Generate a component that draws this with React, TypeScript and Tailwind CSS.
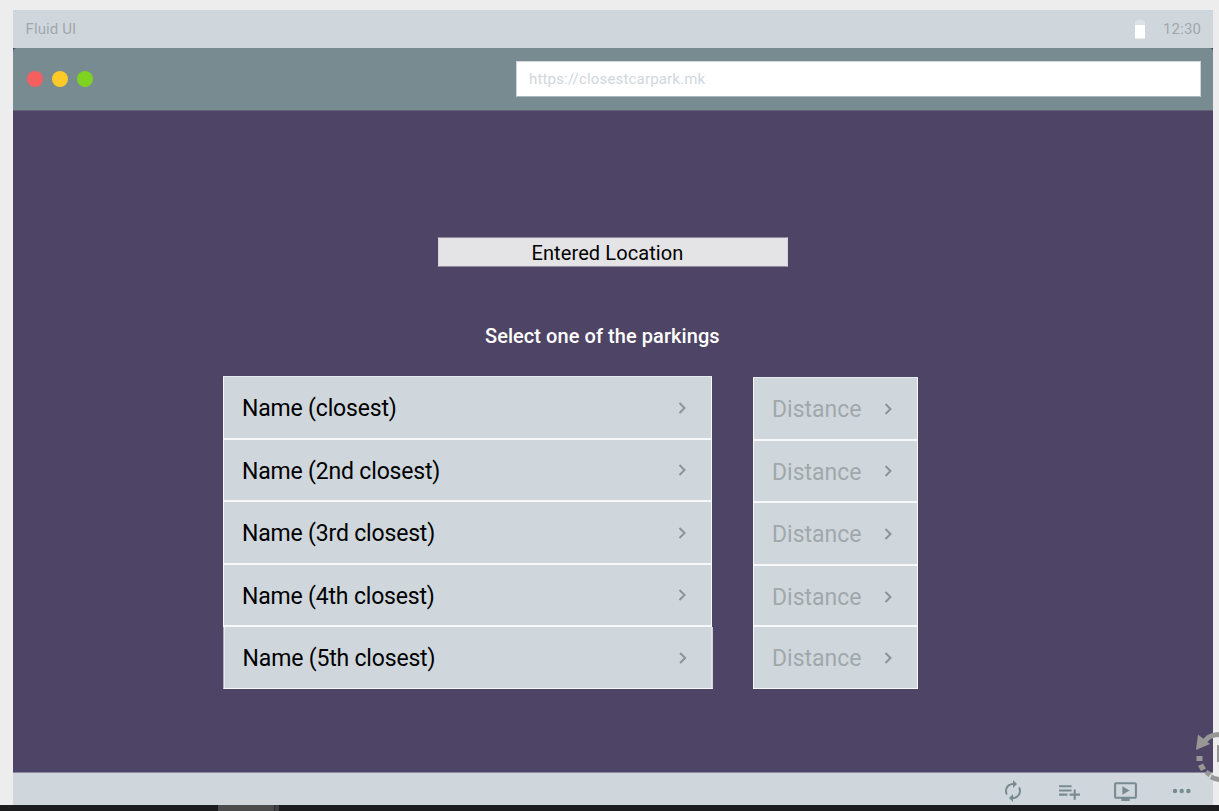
const names = [
  { label: "Name (closest)", box: "h-[63px] border-b-2" },
  { label: "Name (2nd closest)", box: "h-[62px] border-b-2" },
  { label: "Name (3rd closest)", box: "h-[63px] border-b-2" },
  { label: "Name (4th closest)", box: "h-[62px] border-b-2" },
  { label: "Name (5th closest)", box: "h-[62px] border-b translate-x-[0.6px]" },
];

const distances = [
  "h-[63px] border-b-2",
  "h-[62px] border-b-2",
  "h-[63px] border-b-2",
  "h-[61px] border-b-2 pt-[2px]",
  "h-[62px] border-b",
];

function Chevron() {
  return (
    <svg viewBox="0 0 10 14" className="h-[14px] w-[10px] shrink-0" fill="none" stroke="#8f9294" strokeWidth="2">
      <path d="M2.500 2l5 5-5 5" />
    </svg>
  );
}

function StatusBar() {
  return (
    <div className="flex h-[38px] items-center justify-between bg-[#cfd7dd] pr-[12px] pl-[12.5px] text-[15px] font-[450] tracking-[0.12px] text-[#a1a8ab]">
      <span>Fluid UI</span>
      <div className="flex items-center gap-[18px]">
        <svg viewBox="0 0 10 20" className="h-[20px] w-[10px]">
          <path d="M0 6V3.500Q0 1.500 2.500 1.500V0.500H7.500V1.500Q10 1.500 10 3.500V6Z" fill="#dde3e7" />
          <rect x="0" y="6" width="10" height="13.500" fill="#fff" />
        </svg>
        <span>12:30</span>
      </div>
    </div>
  );
}

function BrowserBar() {
  return (
    <div className="bg-[#4e4465]">
      <div className="flex h-[62px] items-center justify-between rounded-t-[4px] bg-[#788b90] pr-[12px] pl-[14px]">
        <div className="flex gap-[9px]">
          <span className="size-[16px] rounded-full bg-[#f55f5f]" />
          <span className="size-[16px] rounded-full bg-[#ffca28]" />
          <span className="size-[16px] rounded-full bg-[#7ed321]" />
        </div>
        <div className="flex h-[36px] w-[685px] items-center border border-[#cfd7dd] border-b-[#a9b6bc] bg-white pl-[12px] text-[15px] font-[450] tracking-[0.17px] text-[#cfd7dd]">
          https://closestcarpark.mk
        </div>
      </div>
    </div>
  );
}

function Toolbar() {
  return (
    <div className="flex h-[33px] items-center gap-[32px] border-t border-[#8d879c] bg-[#cfd7dd] pt-[4px] pl-[988px] text-[#788b90]">
      <svg viewBox="0 0 24 24" className="size-[24px]" fill="currentColor">
        <path d="M12 6v3l4-4-4-4v3c-4.420 0-8 3.580-8 8 0 1.570.460 3.030 1.240 4.260L6.700 14.800c-.450-.830-.700-1.790-.700-2.800 0-3.310 2.690-6 6-6zm6.760 1.740L17.300 9.200c.440.840.700 1.790.700 2.800 0 3.310-2.690 6-6 6v-3l-4 4 4 4v-3c4.420 0 8-3.580 8-8 0-1.570-.460-3.030-1.240-4.260z" />
      </svg>
      <svg viewBox="0 0 24 24" className="size-[25px]" fill="currentColor">
        <path d="M14 10H2v2h12v-2zm0-4H2v2h12V6zm4 8v-4h-2v4h-4v2h4v4h2v-4h4v-2h-4zM2 16h8v-2H2v2z" />
      </svg>
      <svg viewBox="0 0 24 24" className="-ml-px size-[25px]" fill="currentColor">
        <path d="M21 3H3c-1.110 0-2 .890-2 2v12c0 1.100.890 2 2 2h5v2h8v-2h5c1.100 0 1.990-.900 1.990-2L23 5c0-1.110-.900-2-2-2zm0 14H3V5h18v12zm-5-6l-7 4V7z" />
      </svg>
      <svg viewBox="0 0 24 24" className="size-[24px]" fill="currentColor">
        <circle cx="5" cy="12" r="2.200" />
        <circle cx="11.700" cy="12" r="2.200" />
        <circle cx="18.400" cy="12" r="2.200" />
      </svg>
    </div>
  );
}

export default function App() {
  return (
    <div className="relative flex h-[811px] w-[1219px] flex-col overflow-hidden bg-[#ededed] pt-[10px] font-['Roboto','Liberation_Sans',sans-serif]">
      <div className="ml-[13px] flex h-[795px] w-[1200px] flex-col">
        <StatusBar />
        <BrowserBar />
        <main className="flex h-[662px] flex-col border-t border-[#655f78] bg-[#4e4465]">
          <div className="mt-[126px] ml-[425px] flex h-[30px] w-[350px] items-center justify-center border border-[#8f899d] border-x-[#d5d4da] bg-[#e4e4e6] pt-px pr-[11px] text-[20px] tracking-[0.1px] text-black">
            <span>Entered Location</span>
          </div>
          <p className="mt-[54px] ml-[472px] text-[20px] leading-[30px] font-medium tracking-[0.06px] whitespace-nowrap text-white">
            Select one of the parkings
          </p>
          <div className="mt-[25px] ml-[210px] flex items-start gap-[41px]">
            <div className="w-[489px] border-t border-[#e8ebee]">
              {names.map((row) => (
                <div
                  key={row.label}
                  className={`flex items-center justify-between border-x border-[#f6f8f9] bg-[#cfd7dd] pr-[24px] pl-[18px] text-[23px] tracking-[-0.18px] text-black ${row.box}`}
                >
                  <span className="pt-[4px]">{row.label}</span>
                  <Chevron />
                </div>
              ))}
            </div>
            <div className="mt-px w-[165px] border-t border-[#e8ebee]">
              {distances.map((box, i) => (
                <div
                  key={i}
                  className={`flex items-center justify-between border-x border-[#f6f8f9] bg-[#cfd7dd] pr-[24px] pl-[18px] text-[23px] text-[#a1a8ab] ${box}`}
                >
                  <span className="pt-[4px]">Distance</span>
                  <Chevron />
                </div>
              ))}
            </div>
          </div>
        </main>
        <Toolbar />
      </div>
      <div className="flex h-[6px] bg-[#1c1c1e] pl-[218px]">
        <span className="w-[56px] bg-[#4b4b4b]" />
        <span className="w-px bg-[#2a2a2a]" />
        <span className="w-[4px] bg-[#404040]" />
      </div>
      <svg viewBox="0 0 24 52" className="absolute top-[731px] left-[1195px] h-[52px] w-[24px]" fill="none">
        <path d="M24 3.500C17 3.500 11 7 8 13" stroke="#979795" strokeWidth="5" />
        <path d="M3 3.500L15 13L1 19Z" fill="#979795" />
        <path d="M1.500 25h6v5h-6zM3 35l5-2.500 3 5-5 2.500zM9.500 42.500l3-3.500 4 3-3 4z" fill="#979795" />
        <path d="M17 43.500Q20 45.500 24 46V51Q19 50.500 15 48Z" fill="#979795" />
        <rect x="22" y="14" width="2" height="17" fill="#979795" />
      </svg>
    </div>
  );
}
